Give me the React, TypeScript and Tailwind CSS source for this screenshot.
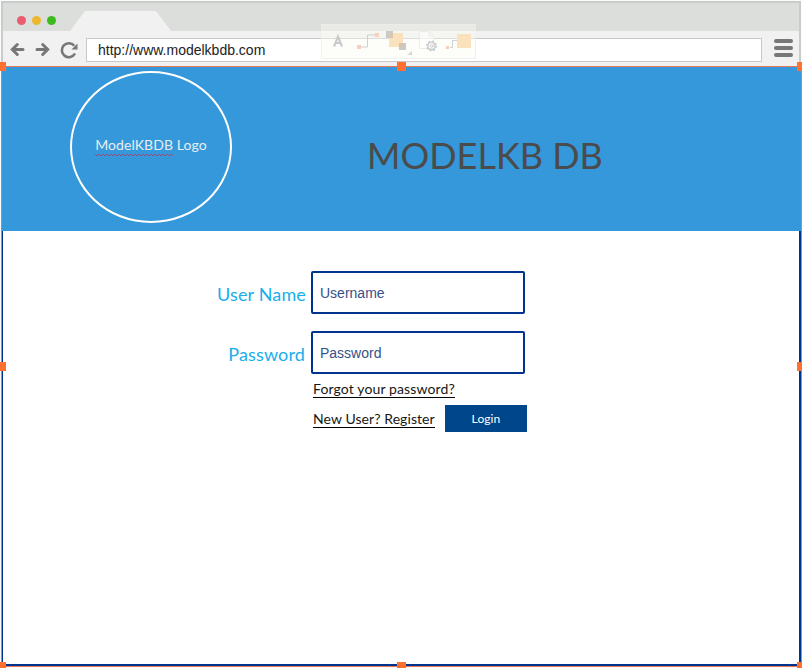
import React from "react";

function TitleBar() {
  return (
    <div className="flex h-7 shrink-0 bg-[#dcdedb] pl-[13px]">
      <div className="flex gap-[6px] pl-[0.5px] pt-[12.5px]">
        <span className="size-[9px] rounded-full bg-[#ea5c6e]" />
        <span className="size-[9px] rounded-full bg-[#efb62f]" />
        <span className="size-[9px] rounded-full bg-[#3cbb1d]" />
      </div>
      <svg className="ml-[14.5px] h-7 w-[101px]" viewBox="0 0 101 28">
        <path d="M0 28 L15 8 H86 L101 28Z" fill="#f1f1f1" />
      </svg>
    </div>
  );
}

function Toolbar() {
  return (
    <div className="flex h-[35px] shrink-0 bg-[#f1f1f1] pl-[7px]">
      <svg className="h-[35px] w-[76px]" viewBox="0 0 76 35" fill="none" stroke="#777" strokeWidth="3">
        <path d="M2.500 18.500H13M7.300 13.500L2.300 18.500L7.300 23.500" strokeLinecap="round" />
        <path d="M27 18.500H37.500M32.700 13.500L37.700 18.500L32.700 23.500" strokeLinecap="round" />
        <path d="M64.300 14.800A7 7 0 1 0 65 22.500" strokeWidth="2.600" />
        <path d="M67.500 12.500V18.500H61.500Z" fill="#777" stroke="none" />
      </svg>
      <div className="mt-[7px] flex h-6 w-[676px] items-center border border-[#c8caca] bg-white pl-[11px] text-[14px] text-[#222]">
        <span>http://www.modelkbdb.com</span>
      </div>
      <div className="ml-3 mt-2 flex flex-col gap-[3px]">
        <span className="h-1 w-[19px] rounded-full bg-[#777]" />
        <span className="h-1 w-[19px] rounded-full bg-[#777]" />
        <span className="h-1 w-[19px] rounded-full bg-[#777]" />
      </div>
    </div>
  );
}

function ShapeMenu() {
  return (
    <svg className="absolute left-[321px] top-6 h-[35px] w-[155px]" viewBox="0 0 155 35">
      <rect x=".5" y=".5" width="154" height="34" fill="#fcfcf6" fillOpacity=".4" stroke="#eeefeb" strokeOpacity=".8" />
      <rect x="1" y="15" width="153" height="19" fill="#fdfdfa" />
      <path d="M1 14.500H154" stroke="#dcdddb" />
      <path d="M13 22.500L17 12.700L21 22.500M14.600 19H19.400" fill="none" stroke="#c9cacb" strokeWidth="2.200" />
      <path d="M40 23H46.500V11H54" fill="none" stroke="#cfd0d0" />
      <rect x="36" y="21" width="4" height="4" fill="#fccdbb" />
      <rect x="54" y="9" width="4" height="4" fill="#fccdbb" />
      <rect x="65" y="7" width="7" height="7" fill="#c9caca" />
      <rect x="68" y="9" width="14" height="14" fill="#fae2be" />
      <rect x="68" y="9" width="4" height="5" fill="#dcc8a9" />
      <rect x="78" y="19" width="7" height="7" fill="#cac9c9" />
      <rect x="78" y="19" width="4" height="4" fill="#d7c4ab" />
      <path d="M91 27V31H86Z" fill="#d5d6d5" />
      <path d="M98.500 7.500H108L112.500 12V24.500H98.500ZM108 7.500V12H112.500" fill="#fff" fillOpacity=".5" stroke="#ededeb" />
      <g fill="none" stroke="#c9cccd">
        <circle cx="110.500" cy="22" r="3.700" strokeWidth="1.500" />
        <circle cx="110.500" cy="22" r="1.300" />
        <circle cx="110.500" cy="22" r="4.800" strokeWidth="1.500" strokeDasharray="1.800 1.970" />
      </g>
      <path d="M129 23.500H131.500V16.500H136" fill="none" stroke="#cfd0d0" />
      <rect x="125" y="22" width="3" height="3" fill="#fccdbb" />
      <rect x="136" y="10" width="14" height="14" fill="#fae2be" />
    </svg>
  );
}

function SpellingMark() {
  return (
    <svg className="absolute left-0 top-[19px] h-[4px] w-[78px]" viewBox="0 0 78 4">
      <defs>
        <pattern id="zigzag" width="4" height="4" patternUnits="userSpaceOnUse">
          <path d="M-1 2L0 1L2 3L4 1L5 2" fill="none" stroke="#a8436c" strokeWidth=".9" />
        </pattern>
      </defs>
      <rect width="78" height="4" fill="url(#zigzag)" />
    </svg>
  );
}

function Banner() {
  return (
    <header className="flex h-[164px] shrink-0 bg-[#3598db] pl-[68px] font-['Lato',sans-serif]">
      <div className="mt-1 flex h-[152px] w-[162px] items-center justify-center rounded-[50%] border-2 border-white text-[14px] leading-[22px] text-[#e8edf0]">
        <div className="relative -mt-1 whitespace-nowrap tracking-[0.08px]">
          ModelKBDB Logo
          <SpellingMark />
        </div>
      </div>
      <h1 className="ml-[135px] mt-[64px] whitespace-nowrap text-[36px] leading-[48px] text-[#4b4b4b]">MODELKB DB</h1>
    </header>
  );
}

function Field({ label, hint }: { label: string; hint: string }) {
  return (
    <label className="flex h-[43px] items-center">
      <span className={`w-[305px] pt-1 text-right font-['Lato',sans-serif] text-[18px] text-[#18aeeb] ${label === "Password" ? "pr-[2px] tracking-[0.15px]" : "pr-[1px] tracking-[0.15px]"}`}>{label}</span>
      <input
        className="ml-[4px] h-[43px] w-[214px] rounded-[2px] border-2 border-[#00338d] bg-white pl-[7px] text-[14px] placeholder:text-[#36518a] placeholder:opacity-100"
        placeholder={hint}
      />
    </label>
  );
}

function LoginForm() {
  return (
    <main className="flex flex-1 flex-col border-b-2 border-l border-r-2 border-[#00338d] bg-white pt-10">
      <div className="-ml-px flex flex-col gap-[17px]">
        <Field label="User Name" hint="Username" />
        <Field label="Password" hint="Password" />
      </div>
      <div className="ml-[310px] mt-[6px] font-['Lato',sans-serif] text-[14px] text-[#161616]">
        <a className="block h-[18px] w-[142px] whitespace-nowrap border-b border-black leading-[18px] tracking-[0.12px]">Forgot your password?</a>
        <div className="mt-[7px] flex">
          <a className="mt-[5px] block h-[18px] w-[122px] whitespace-nowrap border-b border-black leading-[18px] tracking-[0.08px]">New User? Register</a>
          <button className="ml-[10px] h-[27px] w-[82px] bg-[#00468b] text-[12px] tracking-[0.1px] text-white">Login</button>
        </div>
      </div>
    </main>
  );
}

function Handles() {
  return (
    <div className="pointer-events-none absolute inset-0">
      <i className="absolute left-0 top-[62px] h-[9px] w-[6px] bg-[#ff7031]" />
      <i className="absolute left-[397px] top-[62px] size-[9px] bg-[#ff7031]" />
      <i className="absolute right-0 top-[62px] h-[9px] w-[5px] bg-[#ff7031]" />
      <i className="absolute left-0 top-[362px] h-[9px] w-[6px] bg-[#ff7031]" />
      <i className="absolute right-0 top-[362px] h-[9px] w-[5px] bg-[#ff7031]" />
      <i className="absolute bottom-0 left-0 size-[6px] bg-[#ff7031]" />
      <i className="absolute bottom-0 left-[397px] h-[6px] w-[9px] bg-[#ff7031]" />
      <i className="absolute bottom-0 right-0 h-[6px] w-[5px] bg-[#ff7031]" />
    </div>
  );
}

export default function App() {
  return (
    <div className="relative flex h-[668px] w-[802px] flex-col overflow-hidden bg-[#fbfbfb] pb-px pl-px pt-px font-['Liberation_Sans',sans-serif]">
      <div className="mr-px flex h-[65px] shrink-0 flex-col border-x-2 border-t-2 border-[#c9cccb]">
        <TitleBar />
        <Toolbar />
      </div>
      <div className="flex flex-1 flex-col border border-[#e57b55]">
        <Banner />
        <LoginForm />
      </div>
      <ShapeMenu />
      <Handles />
    </div>
  );
}
